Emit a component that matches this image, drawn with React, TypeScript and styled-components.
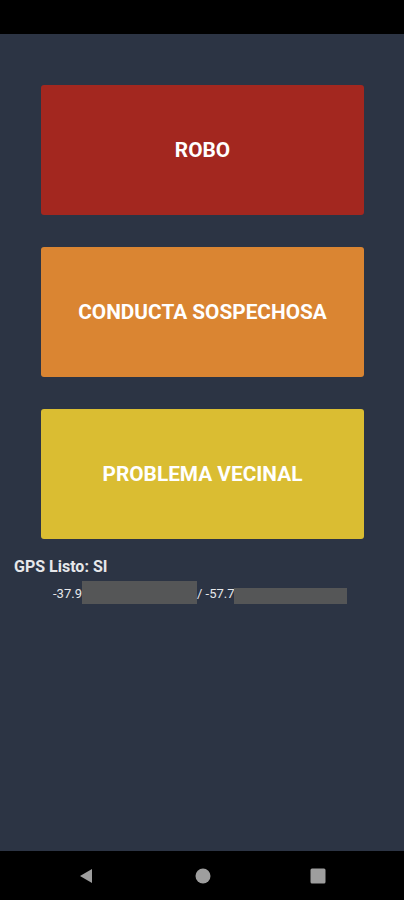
import React from "react";
import styled, { createGlobalStyle } from "styled-components";

const Global = createGlobalStyle`
  html, body { margin: 0; padding: 0; background: #000; }
  body { font-family: Roboto, "Liberation Sans", sans-serif; }
`;

const Screen = styled.div`
  width: 404px;
  height: 900px;
  display: flex;
  flex-direction: column;
  background: #000;
`;

const StatusBar = styled.div`
  height: 34px;
  background: #000;
  flex-shrink: 0;
`;

const Content = styled.div`
  flex: 1;
  background: #2c3444;
  display: flex;
  flex-direction: column;
  padding-top: 51px;
`;

const Buttons = styled.div`
  display: flex;
  flex-direction: column;
  gap: 32.5px;
  padding: 0 40px 0 41px;
`;

const AlertButton = styled.button<{ $color: string }>`
  height: 129.5px;
  border: none;
  border-radius: 3px;
  background: ${(p) => p.$color};
  color: #fff;
  font-family: Roboto, "Liberation Sans", sans-serif;
  font-weight: 700;
  font-size: 20.8px;
  letter-spacing: 0;
  text-transform: uppercase;
  display: flex;
  align-items: center;
  justify-content: center;
  cursor: pointer;
  padding: 0;
`;

const GpsLabel = styled.div`
  margin: 18px 0 0 14px;
  color: #e6e7ea;
  font-weight: 700;
  font-size: 16px;
  line-height: 20px;
`;

const CoordRow = styled.div`
  display: flex;
  align-items: flex-end;
  margin: 4px 0 0 53px;
  color: #e6e7ea;
  font-size: 13px;
  line-height: 16px;
  height: 23px;
`;

const Coord = styled.span`
  padding-bottom: 2px;
`;

const Redact = styled.span<{ $w: number; $h: number }>`
  display: inline-block;
  width: ${(p) => p.$w}px;
  height: ${(p) => p.$h}px;
  background: #555657;
`;

const NavBar = styled.div`
  height: 49px;
  background: #000;
  flex-shrink: 0;
  display: flex;
  align-items: center;
  justify-content: space-between;
  padding: 0 76px 0 77px;
`;

const NavIcon = styled.svg`
  width: 20px;
  height: 20px;
  display: block;
`;

export default function App() {
  return (
    <>
      <Global />
      <Screen>
        <StatusBar />
        <Content>
          <Buttons>
            <AlertButton $color="#a3271f">Robo</AlertButton>
            <AlertButton $color="#da8532">Conducta sospechosa</AlertButton>
            <AlertButton $color="#dabd32">Problema vecinal</AlertButton>
          </Buttons>
          <GpsLabel>GPS Listo: SI</GpsLabel>
          <CoordRow>
            <Coord>-37.9</Coord>
            <Redact $w={115} $h={23} />
            <Coord>/ -57.7</Coord>
            <Redact $w={113} $h={16} />
          </CoordRow>
        </Content>
        <NavBar>
          <NavIcon viewBox="0 0 20 20">
            <path d="M15 3 L15 17 L3 10 Z" fill="#9e9e9e" />
          </NavIcon>
          <NavIcon viewBox="0 0 20 20">
            <circle cx="10" cy="10" r="7.5" fill="#9e9e9e" />
          </NavIcon>
          <NavIcon viewBox="0 0 20 20">
            <rect x="2.5" y="2.5" width="15" height="15" rx="1.5" fill="#9e9e9e" />
          </NavIcon>
        </NavBar>
      </Screen>
    </>
  );
}
